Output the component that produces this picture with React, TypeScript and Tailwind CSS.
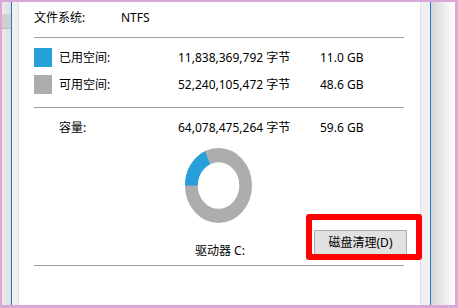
import React from "react";

const font = "font-['Noto_Sans','Noto_Sans_CJK_SC',sans-serif]";

function Donut() {
  return (
    <svg width="67" height="75" viewBox="0 0 100 100" preserveAspectRatio="none">
      <circle cx="50" cy="50" r="40.5" fill="none" stroke="#adadad" strokeWidth="19" />
      <path d="M 9.5 50 A 40.5 40.5 0 0 1 33.78 12.89" fill="none" stroke="#26a0da" strokeWidth="19" />
    </svg>
  );
}

function Row({ swatch, label, bytes, size }: { swatch?: string; label: string; bytes: string; size: string }) {
  return (
    <div className="flex h-[19px] items-center text-[12px] leading-[16px] text-black">
      <div className="w-[25px] flex items-center">
        {swatch ? <div className="w-[18px] h-[19px]" style={{ backgroundColor: swatch }} /> : null}
      </div>
      <div className="w-[119px] whitespace-nowrap">{label}</div>
      <div className="w-[142px] whitespace-nowrap">{bytes}</div>
      <div className="whitespace-nowrap">{size}</div>
    </div>
  );
}

export default function App() {
  return (
    <div className={`w-[458px] h-[308px] bg-[#d9a8d9] pt-[2px] pl-[2px] pr-[3px] pb-[3px] ${font}`}>
      <div className="flex h-full w-full">
        {/* left strip */}
        <div className="w-[9px] h-full bg-gradient-to-r from-[#ebebeb] to-[#dedede] flex flex-col">
          <div className="mt-[12px] h-[15px] bg-[#d0d0d0] border-b border-[#bdbdbd]" />
        </div>
        <div className="w-[1px] h-full bg-[#1a7bd0]" />
        <div className="w-[7px] h-full bg-[#f0f0f0] border-r border-[#dcdcdc]" />
        {/* content */}
        <div className="relative w-[401px] h-full bg-white pl-[15px] flex flex-col">
          <div className="h-[35px] pt-[8px] flex text-[12px] leading-[16px] text-black">
            <div className="w-[87px] whitespace-nowrap">文件系统:</div>
            <div>NTFS</div>
          </div>
          <div className="w-[370px] h-[1px] bg-[#a0a0a0]" />
          <div className="mt-[10px]">
            <Row swatch="#26a0da" label="已用空间:" bytes="11,838,369,792 字节" size="11.0 GB" />
          </div>
          <div className="mt-[8px]">
            <Row swatch="#adadad" label="可用空间:" bytes="52,240,105,472 字节" size="48.6 GB" />
          </div>
          <div className="mt-[13px] w-[370px] h-[1px] bg-[#a0a0a0]" />
          <div className="mt-[10px]">
            <Row label="容量:" bytes="64,078,475,264 字节" size="59.6 GB" />
          </div>
          <div className="mt-[11px] flex items-end">
            <div className="ml-[151px] w-[67px] flex flex-col">
              <Donut />
              <div className="mt-[20px] ml-[10px] whitespace-nowrap text-[12px] leading-[16px] text-black">驱动器 C:</div>
            </div>
            <button className="ml-[62px] mb-[3px] w-[93px] h-[26px] bg-[#e1e1e1] border border-[#adadad] text-[12px] leading-[16px] text-black flex items-center justify-center">
              磁盘清理(D)
            </button>
          </div>
          <div className="mt-[6px] w-[370px] h-[1px] bg-[#a0a0a0]" />
          {/* red annotation */}
          <div className="absolute left-[287px] top-[212px] w-[116px] h-[46px] border-[6px] border-[#ff0000] rounded-[3px] pointer-events-none" />
        </div>
        {/* right strip */}
        <div className="w-[10px] h-full bg-[#f0f0f0] border-l border-[#e2e2e2]" />
        <div className="w-[1px] h-full bg-[#1a7bd0]" />
        <div className="flex-1 h-full bg-gradient-to-r from-[#d6d6d6] to-[#ffffff]" />
      </div>
    </div>
  );
}
